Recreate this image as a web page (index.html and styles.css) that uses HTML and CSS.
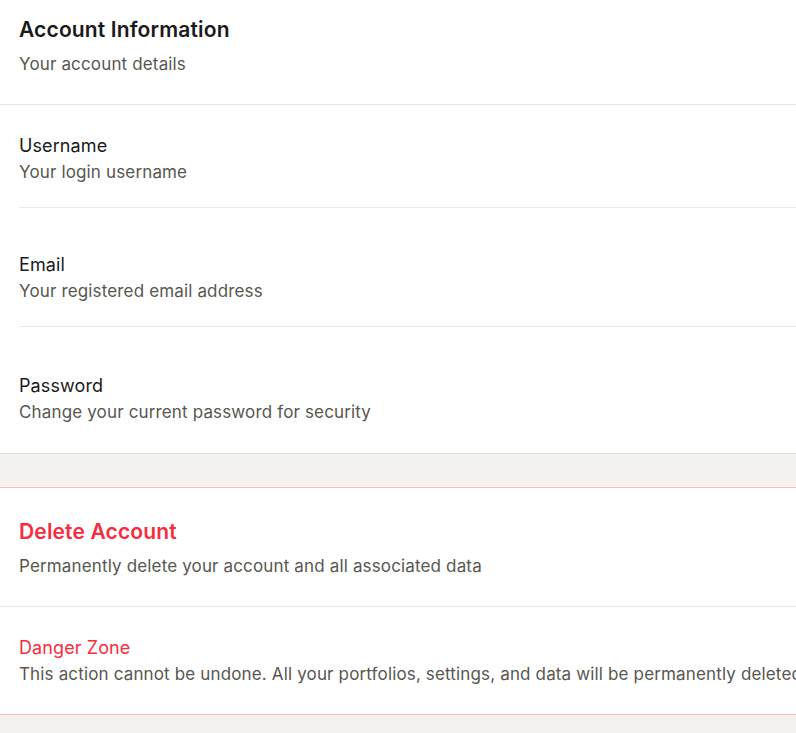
FILE: index.html
```html
<!DOCTYPE html>
<html lang="en">
<head>
<meta charset="UTF-8">
<meta name="viewport" content="width=device-width, initial-scale=1.0">
<title>Account Settings</title>
<link rel="stylesheet" href="styles.css">
</head>
<body>
<div class="page">
    <section class="card">
        <div class="card-header">
            <h2 class="card-title">Account Information</h2>
            <p class="card-desc">Your account details</p>
        </div>
        <div class="card-body">
            <div class="row row-username">
                <div class="row-label">Username</div>
                <div class="row-desc">Your login username</div>
            </div>
            <div class="row row-email">
                <div class="row-label">Email</div>
                <div class="row-desc">Your registered email address</div>
            </div>
            <div class="row row-password">
                <div class="row-label">Password</div>
                <div class="row-desc">Change your current password for security</div>
            </div>
        </div>
    </section>

    <section class="card card-danger">
        <div class="card-header danger-header">
            <h2 class="card-title danger-title">Delete Account</h2>
            <p class="card-desc">Permanently delete your account and all associated data</p>
        </div>
        <div class="card-body">
            <div class="row row-danger">
                <div class="row-label danger-label">Danger Zone</div>
                <div class="row-desc">This action cannot be undone. All your portfolios, settings, and data will be permanently deleted.</div>
            </div>
        </div>
    </section>
</div>
</body>
</html>
```

FILE: styles.css
```css
body {
    margin: 0;
    padding: 0;
    background-color: #f3f2ee;
    font-family: Inter, "Noto Sans", sans-serif;
    overflow: hidden;
}

.page {
    width: 1000px;
    display: flex;
    flex-direction: column;
    gap: 33px;
}

.card {
    background-color: #fff;
    border-bottom: 1px solid #dfdfdb;
}

.card-danger {
    border-top: 1px solid #fdb9c0;
    border-bottom: 1px solid #fdb9c0;
}

.card-header {
    padding: 16px 19px 28px;
    border-bottom: 1px solid #e6e6e3;
}

.card-title {
    margin: 0;
    font-size: 21px;
    line-height: 28px;
    font-weight: 600;
    letter-spacing: 0.15px;
    color: #1a1a1a;
}

.card-desc {
    margin: 8px 0 0;
    font-size: 17px;
    line-height: 24px;
    letter-spacing: 0.15px;
    color: #57574f;
    white-space: nowrap;
}

/* rows of the settings list */
.card-body {
    padding: 0 0 0 19px;
}

.row {
    border-bottom: 1px solid #ebebe8;
}

.row:last-child {
    border-bottom: none;
}

.row-username {
    padding: 28px 0 22px;
}

.row-email {
    padding: 44px 0 22px;
}

.row-password {
    padding: 46px 0 28px;
}

.row-label {
    font-size: 18px;
    line-height: 26px;
    letter-spacing: 0.1px;
    color: #1a1a1a;
}

.row-desc {
    font-size: 17px;
    line-height: 26px;
    letter-spacing: 0.15px;
    color: #57574f;
    white-space: nowrap;
}

/* danger card */
.danger-header {
    padding: 30px 19px 28px;
}

.danger-title {
    color: #f82c3e;
}

.row-danger {
    padding: 28px 0 27px;
}

.danger-label {
    color: #f82c3e;
}
```
